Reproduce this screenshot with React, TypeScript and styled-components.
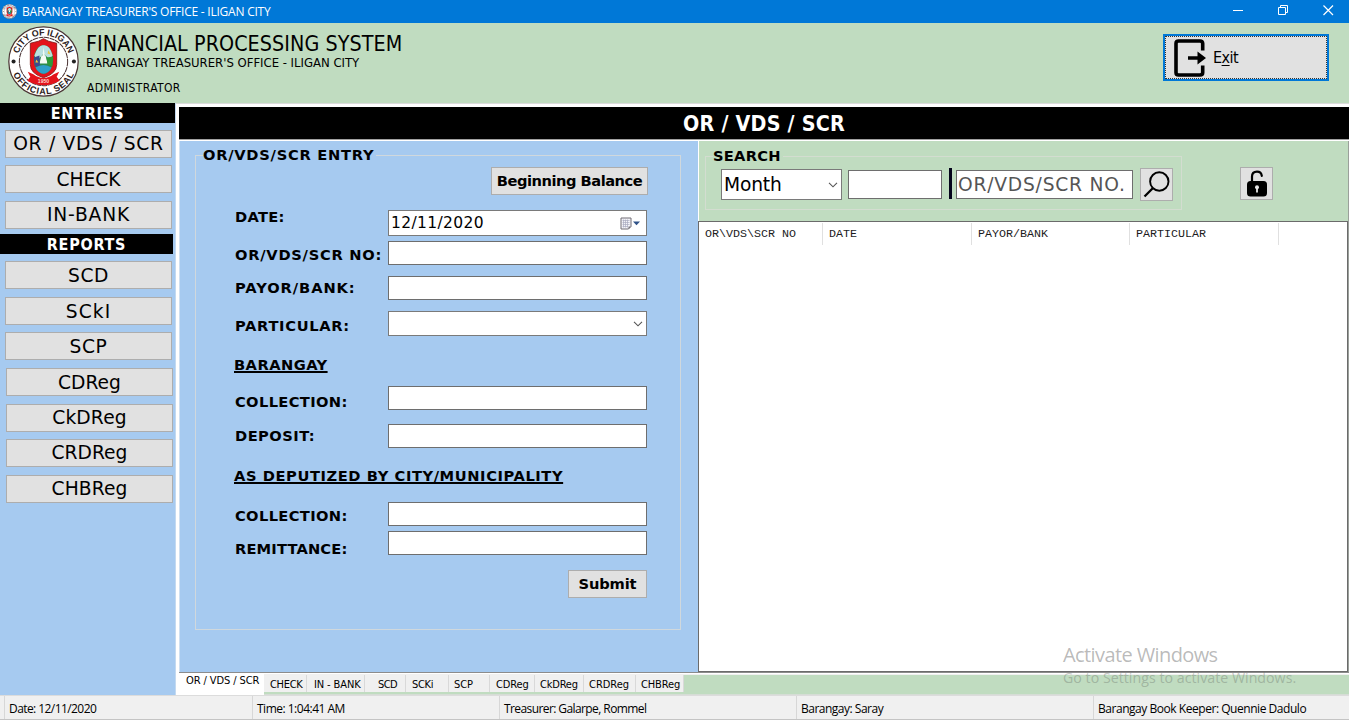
import React from 'react';
import styled, { createGlobalStyle } from 'styled-components';

const VERDANA = "'DejaVu Sans', Verdana, sans-serif";
const TAHOMA = "'DejaVu Sans Condensed', Tahoma, sans-serif";
const SEGOE = "'Open Sans', 'Segoe UI', sans-serif";

const GlobalStyle = createGlobalStyle`
  * { box-sizing: border-box; }
  body { margin: 0; background: #f0f0f0; color: #000; overflow: hidden; }
  button, input { margin: 0; border-radius: 0; outline: none; color: #000; }
`;

const Window = styled.div`
  position: relative;
  display: flex;
  flex-direction: column;
  width: 1349px;
  height: 720px;
  overflow: hidden;
`;

const TitleBar = styled.div`
  display: flex;
  align-items: center;
  height: 23px;
  flex: none;
  padding-left: 2px;
  background: #0078d7;
`;

const WindowTitle = styled.div`
  margin-left: 5px;
  flex: 1;
  font: 12px/22px ${SEGOE};
  letter-spacing: -0.232px;
  color: #fff;
  white-space: nowrap;
`;

const WindowControls = styled.svg`
  width: 120px;
  height: 23px;
  display: block;
`;

const Header = styled.header`
  display: flex;
  height: 80px;
  flex: none;
  padding: 3px 20px 0 8px;
  background: #c0dcc0;
`;

const HeaderText = styled.div`
  margin-left: 7px;
  flex: 1;
  font-family: ${TAHOMA};
  white-space: nowrap;
`;

const SystemName = styled.div`
  font-size: 21.3px;
  line-height: 26px;
  padding-top: 5px;
  letter-spacing: 0.07px;
`;

const OfficeName = styled.div`
  font-size: 13px;
  line-height: 16px;
  margin-top: -2px;
  letter-spacing: -0.02px;
`;

const UserRole = styled.div`
  font-size: 12px;
  line-height: 16px;
  margin: 9px 0 0 1px;
  letter-spacing: 0.36px;
`;

const ExitButton = styled.button`
  display: flex;
  align-items: center;
  width: 166px;
  height: 47px;
  margin-top: 8px;
  padding: 0;
  border: 2px solid #0078d7;
  background: #e1e1e1;
  font: 16px/20px ${TAHOMA};
  letter-spacing: -0.5px;
`;

const FocusRing = styled.span`
  display: flex;
  align-items: center;
  width: 100%;
  height: 100%;
  padding-left: 8px;
  border: 1px dotted #333;

  svg { margin-right: 7px; }
  u { text-decoration-thickness: 1px; text-underline-offset: 2px; }
`;

const Body = styled.div`
  display: flex;
  height: 592px;
  flex: none;
`;

const Sidebar = styled.nav`
  width: 176px;
  flex: none;
  background: #a6caf0;
  border-right: 1px solid #c3d9f0;
`;

const SidebarHeading = styled.h2<{ $width: number; $top?: number }>`
  width: ${p => p.$width}px;
  height: 20px;
  margin: ${p => p.$top ?? 0}px 0 0;
  background: #000;
  color: #fff;
  font: bold 16px/22px ${TAHOMA};
  letter-spacing: 0.74px;
  text-align: center;
`;

const NavGroup = styled.div<{ $top: number }>`
  display: flex;
  flex-direction: column;
  gap: 7.6px;
  padding: ${p => p.$top}px 0 0 5px;
`;

const NavButton = styled.button<{ $track: number; $indent?: number; $drop?: number }>`
  width: 167px;
  height: 28px;
  margin-left: ${p => p.$indent ?? 0}px;
  padding: ${p => p.$drop ?? 0}px 0 0;
  border: 1px solid #adadad;
  background: #e1e1e1;
  font: 18.67px/24px ${VERDANA};
  letter-spacing: ${p => p.$track}px;
`;

const Main = styled.main`
  display: flex;
  flex-direction: column;
  width: 1173px;
  border-top: 1px solid #dcdcdc;
  background: #fff;
`;

const PageTitle = styled.h1`
  height: 33px;
  flex: none;
  margin: 3px 0 0 3px;
  border-bottom: 1px solid #a0a0a0;
  background: #000;
  color: #fff;
  font: bold 21.3px/34px ${TAHOMA};
  letter-spacing: 0.22px;
  text-align: center;
`;

const Page = styled.div`
  display: flex;
  height: 533px;
  flex: none;
  margin-left: 3px;
  padding-top: 1px;
  border-bottom: 1px solid #8c8c8c;
`;

const EntryPanel = styled.section`
  width: 519px;
  flex: none;
  padding: 6px 0 0 15px;
  border-left: 1px solid #cfe0f2;
  background: #a6caf0;
`;

const GroupBox = styled.fieldset<{ $width: number; $height: number }>`
  width: ${p => p.$width}px;
  height: ${p => p.$height}px;
  min-width: 0;
  margin: 0;
  padding: 0;
  border: 1px solid #d0d8dd;
`;

const GroupTitle = styled.legend<{ $track: number }>`
  height: 16px;
  margin-left: 7px;
  padding: 0 2px 0 0;
  font: bold 14.67px/16px ${VERDANA};
  letter-spacing: ${p => p.$track}px;
`;

const FormRow = styled.div<{ $gap: number }>`
  display: grid;
  grid-template-columns: 153px 259px;
  margin: ${p => p.$gap}px 0 0 39px;
`;

const FormLabel = styled.label<{ $drop: number; $track: number }>`
  height: 0;
  margin-top: ${p => p.$drop}px;
  font: bold 14.67px/18px ${VERDANA};
  letter-spacing: ${p => p.$track}px;
  white-space: nowrap;
`;

const SectionHeading = styled.h3<{ $gap: number; $track: number }>`
  height: 18px;
  margin: ${p => p.$gap}px 0 0 38px;
  font: bold 14.67px/18px ${VERDANA};
  letter-spacing: ${p => p.$track}px;
  text-decoration: underline;
  text-decoration-thickness: 2px;
  text-underline-offset: 1px;
  text-decoration-skip-ink: none;
`;

const TextField = styled.input<{ $height: number }>`
  width: 100%;
  height: ${p => p.$height}px;
  padding: 0 1px;
  border: 1px solid #6e6e6e;
  background: #fff;
  font: 18.67px/24px ${VERDANA};
  letter-spacing: 0.78px;

  &::placeholder { color: #555; opacity: 1; }
`;

const YearField = styled(TextField)`
  width: 94px;
  margin: 1px 0 0 6px;
`;

const NumberField = styled(TextField)`
  width: 177px;
  margin-top: 1px;
`;

const PickerField = styled.div<{ $height: number; $width?: string; $size: number; $track: number; $padRight?: number }>`
  display: flex;
  align-items: center;
  justify-content: space-between;
  width: ${p => p.$width ?? '100%'};
  height: ${p => p.$height}px;
  padding: 0 ${p => p.$padRight ?? 3}px 0 2px;
  border: 1px solid #7a7a7a;
  background: #fff;
  font: ${p => p.$size}px/22px ${VERDANA};
  letter-spacing: ${p => p.$track}px;
`;

const ActionRow = styled.div<{ $gap: number; $right: number }>`
  display: flex;
  justify-content: flex-end;
  margin: ${p => p.$gap}px ${p => p.$right}px 0 0;
`;

const ActionButton = styled.button<{ $width: number; $track: number }>`
  width: ${p => p.$width}px;
  height: 28px;
  padding: 0;
  border: 1px solid #adadad;
  background: #e1e1e1;
  font: bold 14.67px/26px ${VERDANA};
  letter-spacing: ${p => p.$track}px;
  white-space: nowrap;
`;

const RecordsPanel = styled.section`
  display: flex;
  flex-direction: column;
  width: 651px;
  border-left: 1px solid #fff;
  border-right: 1px solid #9aa09a;
  background: #c0dcc0;
`;

const SearchBar = styled.div`
  display: flex;
  height: 80px;
  flex: none;
  padding: 7px 0 0 6px;

  ${GroupBox} { border-color: #d3ddd0; }
`;

const SearchFields = styled.div`
  display: flex;
  align-items: flex-start;
  padding: 5px 0 0 15px;

  > * { flex: none; }
`;

const Divider = styled.div`
  width: 3px;
  height: 31px;
  margin: -1px 4px 0 7px;
  background: #05051c;
`;

const IconButton = styled.button`
  display: flex;
  align-items: center;
  justify-content: center;
  width: 33px;
  height: 33px;
  flex: none;
  padding: 0;
  border: 1px solid #adadad;
  background: #e1e1e1;
`;

const SearchButton = styled(IconButton)`
  margin: -1px 0 0 7px;
`;

const UnlockButton = styled(IconButton)`
  margin: 19px 0 0 58px;
`;

const RecordList = styled.div`
  flex: 1;
  margin-left: -1px;
  border: 1px solid #6b6b6b;
  background: #fff;
`;

const ListHeader = styled.div`
  display: flex;
  height: 24px;
  padding-top: 1px;
`;

const ListColumn = styled.div<{ $width: number }>`
  width: ${p => p.$width}px;
  height: 22px;
  padding-left: 6px;
  border-right: 1px solid #e0e0e0;
  color: #1c1c1c;
  font: 11.67px/23px 'Liberation Mono', 'Courier New', monospace;
  white-space: nowrap;
`;

const TabStrip = styled.div`
  display: flex;
  flex: 1;
  background: #fff;
`;

const ActiveTab = styled.div`
  width: 88px;
  height: 22px;
  padding-left: 10px;
  background: #fff;
  font: 11px/15px ${TAHOMA};
  letter-spacing: -0.1px;
  white-space: nowrap;
`;

const IdleTabs = styled.div`
  display: flex;
  flex: 1;
  height: 21px;
  margin-top: 1px;
  padding-bottom: 2px;
  border-top: 1px solid #f0f0f0;
  border-bottom: 1px solid #d5ddd5;
  background: #c0dcc0;
`;

const Tab = styled.div<{ $width: number; $pad: number; $track: number }>`
  width: ${p => p.$width}px;
  padding-left: ${p => p.$pad}px;
  border-right: 1px solid #d9d9d9;
  background: #f0f0f0;
  font: 11px/20px ${TAHOMA};
  letter-spacing: ${p => p.$track}px;
  white-space: nowrap;
`;

const StatusBar = styled.footer`
  display: flex;
  height: 25px;
  flex: none;
  padding-left: 4px;
  border-top: 1px solid #dcdcdc;
  border-bottom: 1px solid #c4c4c4;
  background: #f0f0f0;
`;

const StatusCell = styled.div<{ $width: number; $track: number }>`
  width: ${p => p.$width}px;
  padding-left: 4px;
  border-left: 1px solid #d7d7d7;
  font: 12px/25px ${SEGOE};
  letter-spacing: ${p => p.$track}px;
  white-space: nowrap;
`;

const Watermark = styled.div`
  position: absolute;
  left: 1063px;
  top: 642px;
  color: rgba(110, 110, 110, 0.48);
  font-family: ${SEGOE};
  white-space: nowrap;
  pointer-events: none;
`;

const WatermarkTitle = styled.div`
  font-size: 20px;
  line-height: 26px;
  letter-spacing: -0.6px;
`;

const WatermarkText = styled.div`
  font-size: 14.2px;
  line-height: 20px;
  letter-spacing: 0.02px;
  color: rgba(110, 120, 110, 0.4);
`;

const SealDrawing = styled.svg`
  flex: none;
`;

function Seal({ size }: { size: number }) {
  return (
    <SealDrawing width={size} height={size} viewBox="0 0 70 70">
      <defs>
        <path id="sealTop" d="M 9.2 35 A 25.8 25.8 0 0 1 60.8 35" />
        <path id="sealBottom" d="M 2.6 35 A 32.4 32.4 0 0 0 67.4 35" />
      </defs>
      <circle cx="35" cy="35" r="34.2" fill="#fff" stroke="#4a3434" strokeWidth="1.2" />
      <circle cx="35" cy="35" r="23.8" fill="#fff" stroke="#4a3434" strokeWidth="1" strokeDasharray="5 .6" />
      <g fontFamily="Liberation Sans, Arial, sans-serif" fontWeight="bold" fontSize="8.8" fill="#2b1a1a" textAnchor="middle">
        <text textLength="65" lengthAdjust="spacing">
          <textPath href="#sealTop" startOffset="50%">CITY OF ILIGAN</textPath>
        </text>
        <text textLength="76" lengthAdjust="spacing">
          <textPath href="#sealBottom" startOffset="50%">OFFICIAL SEAL</textPath>
        </text>
      </g>
      <circle cx="5.5" cy="35" r="2" fill="#222" />
      <circle cx="65" cy="35" r="2" fill="#222" />
      <path d="M22 17 L30 15 L35 12.5 L40 15 L48 17 V38 Q48 47 35 51 Q22 47 22 38 Z" fill="#e3131b" stroke="#7d1512" strokeWidth="0.8" />
      <path d="M19.5 45 L25 47.5 Q35 55 45 47.5 L50.5 45 L48 50 L51 54 Q35 63 19 54 L22 50 Z" fill="#e3131b" />
      <ellipse cx="35" cy="33" rx="9.6" ry="14" fill="#2c8a4c" />
      <path d="M26 29 Q30 18 35 19 Q41 18 44 29 L41 33 L35 27 L29 34 Z" fill="#b9e0e0" />
      <path d="M35 21 L36.5 30 L34 30 Z M33 29 L37 29 L39 37 L31 37 Z" fill="#f4fbf4" />
      <path d="M25.6 31 L31 29 L31.5 40 L26.5 40 Z" fill="#3b4b8f" />
      <path d="M38 31 L44.4 30 L43.6 40 L39 38 Z" fill="#2f9a38" />
      <path d="M40 24 l2 4 l-3 -1 Z M28 33 l2 3 l-3 0 Z" fill="#e8c93a" />
      <path d="M27 41 Q35 36 43 41 Q40 47 35 47 Q30 47 27 41 Z" fill="#2e9fc9" />
      <text x="35" y="56.5" fontFamily="Liberation Sans, sans-serif" fontSize="5" fontWeight="bold" fill="#ffd9d0" textAnchor="middle">1950</text>
    </SealDrawing>
  );
}

function ExitIcon() {
  return (
    <svg width="32" height="38" viewBox="0 0 32 38">
      <path d="M28.7 11.5 V4.5 Q28.7 2 26 2 H4.5 Q2 2 2 4.5 V33.5 Q2 36 4.5 36 H26 Q28.7 36 28.7 33.5 V26.5" fill="none" stroke="#000" strokeWidth="3.6" />
      <path d="M14 17.2 H23.5 V12.5 L32 19 L23.5 25.5 V20.8 H14 Z" fill="#000" />
    </svg>
  );
}

function Chevron() {
  return (
    <svg width="10" height="6" viewBox="0 0 10 6">
      <path d="M1 .8 L5 4.8 L9 .8" fill="none" stroke="#555" strokeWidth="1.1" />
    </svg>
  );
}

function CalendarIcon() {
  return (
    <svg width="21" height="13" viewBox="0 0 21 13">
      <path d="M1 1 H11 V9.5 L8.5 12 H1 Z" fill="#f3f3f8" stroke="#706c74" />
      <path d="M2.5 3.5 H9.5 M2.5 5.5 H9.5 M2.5 7.5 H9.5 M2.5 9.5 H8 M3.5 2.5 V10.5 M5.5 2.5 V10.5 M7.5 2.5 V10.5" stroke="#a9abc0" strokeWidth=".7" />
      <path d="M8.5 12 V9.5 H11 Z" fill="#706c74" />
      <path d="M13 4.5 H20 L16.5 8.3 Z" fill="#2f5288" />
    </svg>
  );
}

function MagnifierIcon() {
  return (
    <svg width="27" height="27" viewBox="0 0 27 27">
      <circle cx="16.3" cy="10.5" r="9.2" fill="none" stroke="#000" strokeWidth="1.9" />
      <path d="M1.5 25.5 L10 17" stroke="#000" strokeWidth="2.3" />
    </svg>
  );
}

function OpenLockIcon() {
  return (
    <svg width="20" height="27" viewBox="0 0 20 27">
      <path d="M5 13 V6.5 Q5 1.6 10 1.6 Q14.3 1.6 14.8 5.8" fill="none" stroke="#000" strokeWidth="2.2" strokeLinecap="round" />
      <rect x="0" y="11" width="20" height="15.5" rx="3.5" fill="#000" />
      <circle cx="10" cy="17.3" r="2" fill="#e8e8e8" />
      <path d="M9.1 17 H10.9 V22.5 H9.1 Z" fill="#e8e8e8" />
    </svg>
  );
}

const entries = [
  { label: 'OR / VDS / SCR', track: 0.7, drop: 0 },
  { label: 'CHECK', track: 0, drop: 2 },
  { label: 'IN-BANK', track: 0.8, drop: 0 },
];

const reports = [
  { label: 'SCD', track: 0.57, indent: 0, drop: 2 },
  { label: 'SCkI', track: 1.1, indent: 0, drop: 2 },
  { label: 'SCP', track: 0.57, indent: 0, drop: 2 },
  { label: 'CDReg', track: 0, indent: 1, drop: 2 },
  { label: 'CkDReg', track: 0.14, indent: 1, drop: 0 },
  { label: 'CRDReg', track: 0, indent: 1, drop: 0 },
  { label: 'CHBReg', track: 0.1, indent: 1, drop: 0 },
];

const columns = [
  { label: 'OR\\VDS\\SCR NO', width: 124 },
  { label: 'DATE', width: 149 },
  { label: 'PAYOR/BANK', width: 158 },
  { label: 'PARTICULAR', width: 149 },
];

const tabs = [
  { label: 'CHECK', width: 43, pad: 6, track: -0.3 },
  { label: 'IN - BANK', width: 58, pad: 7, track: -0.12 },
  { label: 'SCD', width: 41, pad: 13, track: -0.6 },
  { label: 'SCKi', width: 43, pad: 6, track: -0.3 },
  { label: 'SCP', width: 41, pad: 5, track: -0.1 },
  { label: 'CDReg', width: 45, pad: 6, track: -0.13 },
  { label: 'CkDReg', width: 49, pad: 5, track: -0.2 },
  { label: 'CRDReg', width: 52, pad: 5, track: -0.02 },
  { label: 'CHBReg', width: 48, pad: 5, track: -0.12 },
];

const statusItems = [
  { label: 'Date: 12/11/2020', width: 248, track: -0.57 },
  { label: 'Time: 1:04:41 AM', width: 247, track: -0.5 },
  { label: 'Treasurer: Galarpe, Rommel', width: 297, track: -0.59 },
  { label: 'Barangay: Saray', width: 297, track: -0.5 },
  { label: 'Barangay Book Keeper: Quennie Dadulo', width: 256, track: -0.46 },
];

export default function App() {
  return (
    <Window>
      <GlobalStyle />
      <TitleBar>
        <Seal size={15} />
        <WindowTitle>BARANGAY TREASURER'S OFFICE - ILIGAN CITY</WindowTitle>
        <WindowControls viewBox="0 0 120 23" fill="none" stroke="#fff">
          <path d="M4 10.5 H14" />
          <path d="M49.5 7.5 H56.5 V14.5 H49.5 Z M51.5 7.5 V5.5 H58.5 V12.5 H56.5" />
          <path d="M94.5 5.5 L104 15 M104 5.5 L94.5 15" strokeWidth="1.2" />
        </WindowControls>
      </TitleBar>

      <Header>
        <Seal size={71} />
        <HeaderText>
          <SystemName>FINANCIAL PROCESSING SYSTEM</SystemName>
          <OfficeName>BARANGAY TREASURER'S OFFICE - ILIGAN CITY</OfficeName>
          <UserRole>ADMINISTRATOR</UserRole>
        </HeaderText>
        <ExitButton>
          <FocusRing>
            <ExitIcon />
            <span>E<u>x</u>it</span>
          </FocusRing>
        </ExitButton>
      </Header>

      <Body>
        <Sidebar>
          <SidebarHeading $width={175}>ENTRIES</SidebarHeading>
          <NavGroup $top={6.5}>
            {entries.map(item => (
              <NavButton key={item.label} $track={item.track} $drop={item.drop}>{item.label}</NavButton>
            ))}
          </NavGroup>
          <SidebarHeading $width={173} $top={5.5}>REPORTS</SidebarHeading>
          <NavGroup $top={7}>
            {reports.map(item => (
              <NavButton key={item.label} $track={item.track} $indent={item.indent} $drop={item.drop}>
                {item.label}
              </NavButton>
            ))}
          </NavGroup>
        </Sidebar>

        <Main>
          <PageTitle>OR / VDS / SCR</PageTitle>
          <Page>
            <EntryPanel>
              <GroupBox $width={486} $height={483}>
                <GroupTitle $track={0.73}>OR/VDS/SCR ENTRY</GroupTitle>
                <ActionRow $gap={4} $right={32}>
                  <ActionButton $width={157} $track={-0.48}>Beginning Balance</ActionButton>
                </ActionRow>
                <FormRow $gap={15}>
                  <FormLabel $drop={-2} $track={0.3}>DATE:</FormLabel>
                  <PickerField $height={26} $size={15.5} $track={0.36} $padRight={5}>
                    12/11/2020
                    <CalendarIcon />
                  </PickerField>
                </FormRow>
                <FormRow $gap={5}>
                  <FormLabel $drop={5} $track={0.74}>OR/VDS/SCR NO:</FormLabel>
                  <TextField $height={24} />
                </FormRow>
                <FormRow $gap={11}>
                  <FormLabel $drop={3} $track={0.92}>PAYOR/BANK:</FormLabel>
                  <TextField $height={24} />
                </FormRow>
                <FormRow $gap={11}>
                  <FormLabel $drop={6} $track={0.68}>PARTICULAR:</FormLabel>
                  <PickerField $height={25} $size={15.5} $track={0}>
                    <span />
                    <Chevron />
                  </PickerField>
                </FormRow>
                <SectionHeading $gap={20} $track={0.45}>BARANGAY</SectionHeading>
                <FormRow $gap={12}>
                  <FormLabel $drop={7} $track={0.36}>COLLECTION:</FormLabel>
                  <TextField $height={24} />
                </FormRow>
                <FormRow $gap={14}>
                  <FormLabel $drop={3} $track={0.46}>DEPOSIT:</FormLabel>
                  <TextField $height={24} />
                </FormRow>
                <SectionHeading $gap={19} $track={0.58}>AS DEPUTIZED BY CITY/MUNICIPALITY</SectionHeading>
                <FormRow $gap={17}>
                  <FormLabel $drop={5} $track={0.36}>COLLECTION:</FormLabel>
                  <TextField $height={24} />
                </FormRow>
                <FormRow $gap={5}>
                  <FormLabel $drop={9} $track={0.15}>REMITTANCE:</FormLabel>
                  <TextField $height={24} />
                </FormRow>
                <ActionRow $gap={15} $right={33}>
                  <ActionButton $width={79} $track={-0.15}>Submit</ActionButton>
                </ActionRow>
              </GroupBox>
            </EntryPanel>

            <RecordsPanel>
              <SearchBar>
                <GroupBox $width={477} $height={62}>
                  <GroupTitle $track={0.25}>SEARCH</GroupTitle>
                  <SearchFields>
                    <PickerField $height={31} $width="121px" $size={18.67} $track={-0.16}>
                      Month
                      <Chevron />
                    </PickerField>
                    <YearField $height={29} />
                    <Divider />
                    <NumberField $height={29} placeholder="OR/VDS/SCR NO." />
                    <SearchButton aria-label="Search"><MagnifierIcon /></SearchButton>
                  </SearchFields>
                </GroupBox>
                <UnlockButton aria-label="Unlock"><OpenLockIcon /></UnlockButton>
              </SearchBar>
              <RecordList>
                <ListHeader>
                  {columns.map(col => (
                    <ListColumn key={col.label} $width={col.width}>{col.label}</ListColumn>
                  ))}
                </ListHeader>
              </RecordList>
            </RecordsPanel>
          </Page>

          <TabStrip>
            <ActiveTab>OR / VDS / SCR</ActiveTab>
            <IdleTabs>
              {tabs.map(tab => (
                <Tab key={tab.label} $width={tab.width} $pad={tab.pad} $track={tab.track}>{tab.label}</Tab>
              ))}
            </IdleTabs>
          </TabStrip>
        </Main>
      </Body>

      <StatusBar>
        {statusItems.map(item => (
          <StatusCell key={item.label} $width={item.width} $track={item.track}>{item.label}</StatusCell>
        ))}
      </StatusBar>

      <Watermark>
        <WatermarkTitle>Activate Windows</WatermarkTitle>
        <WatermarkText>Go to Settings to activate Windows.</WatermarkText>
      </Watermark>
    </Window>
  );
}
